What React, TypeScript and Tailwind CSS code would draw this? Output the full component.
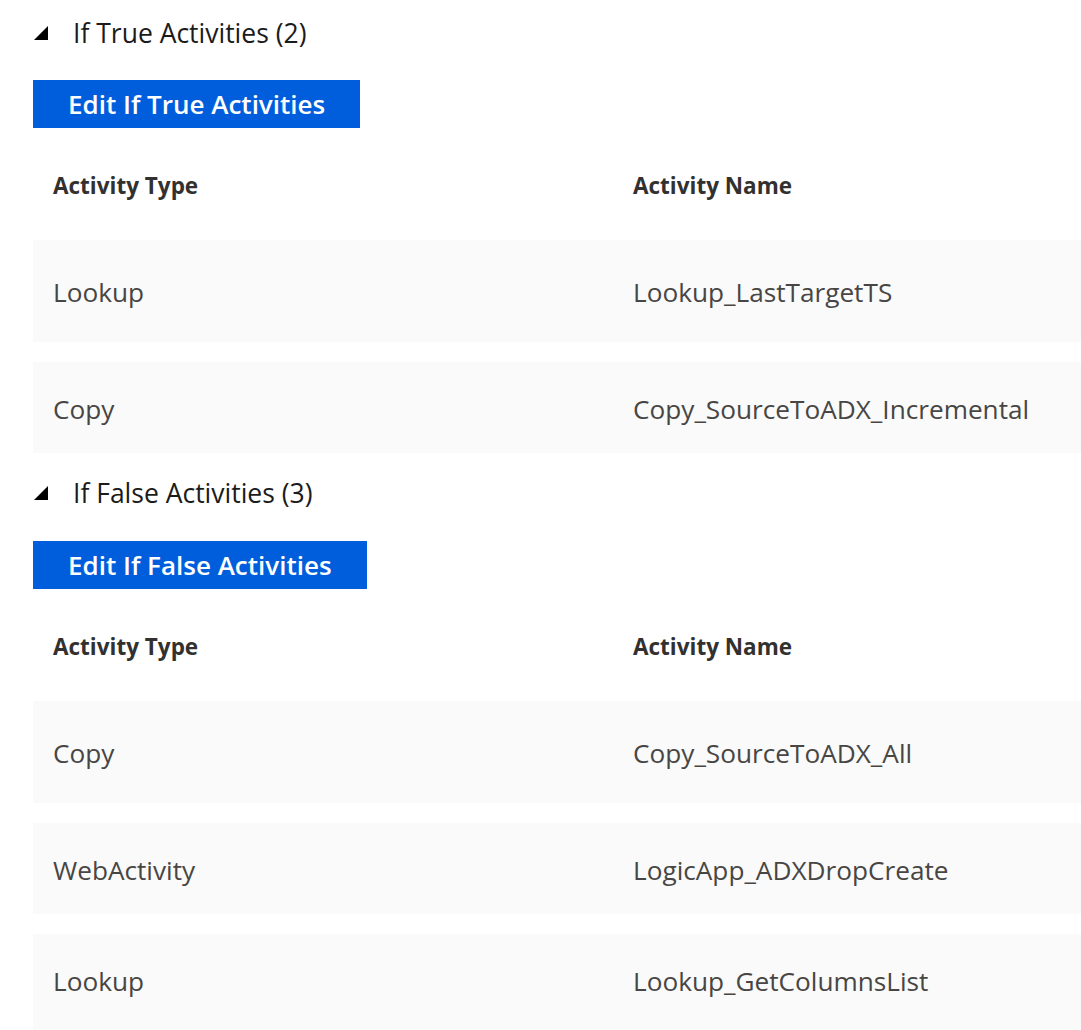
import React from "react";

type Activity = { type: string; name: string };

const trueActivities: Activity[] = [
  { type: "Lookup", name: "Lookup_LastTargetTS" },
  { type: "Copy", name: "Copy_SourceToADX_Incremental" },
];

const falseActivities: Activity[] = [
  { type: "Copy", name: "Copy_SourceToADX_All" },
  { type: "WebActivity", name: "LogicApp_ADXDropCreate" },
  { type: "Lookup", name: "Lookup_GetColumnsList" },
];

function Caret() {
  return (
    <svg width="14" height="14" viewBox="0 0 14 14" className="shrink-0">
      <polygon points="14,0 14,14 0,14" fill="#000" />
    </svg>
  );
}

function Section({
  title,
  button,
  rows,
  titleClass,
  buttonClass,
  lastRowClass = "h-[91px] pt-[29px]",
}: {
  title: string;
  button: string;
  rows: Activity[];
  titleClass: string;
  buttonClass: string;
  lastRowClass?: string;
}) {
  return (
    <section>
      <div className={`flex items-center gap-[25px] pl-[34px] ${titleClass}`}>
        <Caret />
        <span className="text-[26.5px] leading-none text-[#1b1b1b]">{title}</span>
      </div>
      <button
        type="button"
        className={`ml-[33px] flex h-[48px] items-center bg-[#005edc] px-[35px] text-[26px] font-semibold text-white ${buttonClass}`}
      >
        {button}
      </button>
      <div className="ml-[33px]">
        <div className="grid h-[112px] grid-cols-[580px_1fr] items-center pl-[20px] pt-[4px] text-[22.5px] font-bold text-[#323130]">
          <div>Activity Type</div>
          <div>Activity Name</div>
        </div>
        <div className="flex flex-col gap-[20px]">
          {rows.map((r, i) => (
            <div
              key={r.name}
              className={`grid grid-cols-[580px_1fr] bg-[#fafafa] pl-[20px] text-[26.2px] leading-[36px] text-[#484644] ${
                i === 0 ? "h-[102px] pt-[34px]" : i === rows.length - 1 ? lastRowClass : "h-[91px] pt-[29px]"
              }`}
            >
              <div>{r.type}</div>
              <div className="whitespace-nowrap">{r.name}</div>
            </div>
          ))}
        </div>
      </div>
    </section>
  );
}

export default function App() {
  return (
    <div
      className="h-[1030px] w-full overflow-hidden bg-white"
      style={{ fontFamily: '"Open Sans", "Noto Sans", sans-serif' }}
    >
      <Section
        title="If True Activities (2)"
        button="Edit If True Activities"
        rows={trueActivities}
        titleClass="h-[66px]"
        buttonClass="mt-[14px]"
      />
      <Section
        title="If False Activities (3)"
        button="Edit If False Activities"
        rows={falseActivities}
        titleClass="h-[80px]"
        buttonClass="mt-[8px]"
        lastRowClass="h-[100px] pt-[29px]"
      />
    </div>
  );
}
